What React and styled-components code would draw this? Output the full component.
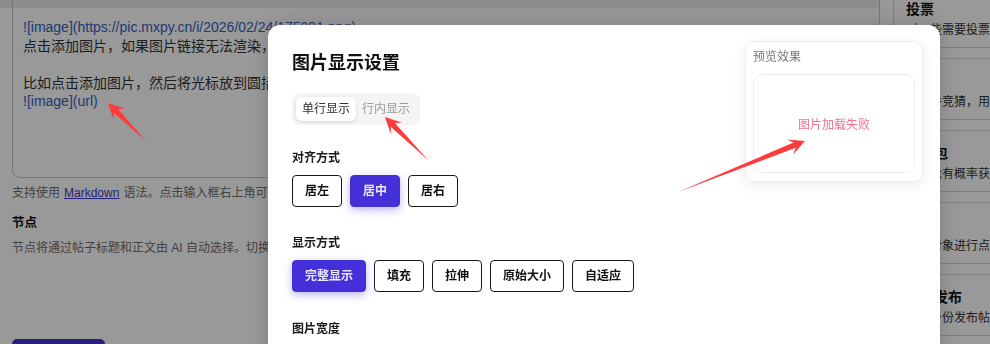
import React from 'react'
import styled, { createGlobalStyle } from 'styled-components'

const GlobalStyle = createGlobalStyle`
  html, body { margin: 0; height: 344px; overflow: hidden; }
  body {
    font-family: "Liberation Sans", "Noto Sans CJK SC", sans-serif;
    background: #fff;
    color: #333;
  }
`

const Page = styled.div`
  display: flex;
  gap: 13px;
  width: 990px;
  height: 344px;
  overflow: hidden;
`

const Content = styled.div`
  width: 880px;
  flex-shrink: 0;
  padding-left: 12px;
  box-sizing: border-box;
  background: linear-gradient(#ececec 0 8px, #fff 8px);
`

const Editor = styled.div`
  height: 178px;
  box-sizing: border-box;
  border: 1px solid #c6c6c6;
  border-top: none;
  border-radius: 0 0 8px 8px;
  padding: 18px 10px 0;
  font-size: 14px;
  line-height: 18.5px;
  white-space: nowrap;
  overflow: hidden;
`

const Line = styled.div`
  min-height: 18.5px;
  color: ${p => (p.$code ? '#3462c2' : '#333')};
`

const Hint = styled.p`
  margin: 6px 0 0;
  font-size: 12px;
  line-height: 18px;
  color: #6e6e6e;
  white-space: nowrap;
  a { color: #4338ca; text-decoration: underline; margin: 0 4px; }
`

const FieldTitle = styled.h4`
  margin: 12px 0 0;
  font-size: 12.5px;
  line-height: 18px;
  font-weight: 700;
  color: #111;
`

const FieldDesc = styled.p`
  margin: 7px 0 0;
  font-size: 12px;
  line-height: 18px;
  color: #6e6e6e;
  white-space: nowrap;
`

const SubmitButton = styled.button`
  margin-top: 82px;
  width: 93px;
  height: 36px;
  border: none;
  border-radius: 5px;
  background: #4636cf;
`

const Side = styled.aside`
  flex: 1;
  display: flex;
  flex-direction: column;
  gap: 10px;
  margin-top: -14px;
`

const Card = styled.div`
  height: 62px;
  flex-shrink: 0;
  box-sizing: border-box;
  border: 1px solid #d6d6d6;
  border-right: none;
  padding: 12px 0 0 12px;
  white-space: nowrap;
  overflow: hidden;
`

const CardTitle = styled.div`
  font-size: 14px;
  line-height: 20px;
  font-weight: 700;
  color: #111;
`

const CardDesc = styled.div`
  margin-top: 2px;
  font-size: 12px;
  line-height: 18px;
  color: #333;
`

const Overlay = styled.div`
  position: fixed;
  inset: 0;
  background: rgba(0, 0, 0, 0.4);
`

const Modal = styled.div`
  position: fixed;
  left: 268px;
  top: 25px;
  width: 672px;
  height: 360px;
  box-sizing: border-box;
  padding: 16px 17px 0 24px;
  display: flex;
  background: #fff;
  border-radius: 12px 12px 0 0;
  box-shadow: 0 0 24px rgba(0, 0, 0, 0.18);
  font-family: "Inter", "Noto Sans CJK SC", sans-serif;
`

const ModalBody = styled.div`
  flex: 1;
  padding-top: 9px;
`

const ModalTitle = styled.h2`
  margin: 0;
  font-size: 18px;
  line-height: 26px;
  font-weight: 700;
  color: #111;
`

const Tabs = styled.div`
  display: inline-flex;
  margin-top: 17px;
  padding: 4px;
  border-radius: 8px;
  background: #f4f4f5;
`

const Tab = styled.div`
  height: 24px;
  padding: 0 6px;
  font-size: 12px;
  line-height: 24px;
  border-radius: 6px;
  color: ${p => (p.$active ? '#333' : '#9a9a9a')};
  background: ${p => (p.$active ? '#fff' : 'transparent')};
  box-shadow: ${p => (p.$active ? '0 1px 3px rgba(0,0,0,0.14)' : 'none')};
`

const Section = styled.div`
  margin-top: ${p => p.$gap}px;
`

const Label = styled.div`
  font-size: 12px;
  line-height: 18px;
  font-weight: 600;
  color: #1a1a1a;
`

const Options = styled.div`
  display: flex;
  gap: 8px;
  margin-top: 8px;
`

const OptButton = styled.button`
  height: 32px;
  padding: 0 12px;
  box-sizing: border-box;
  border: 1px solid ${p => (p.$active ? '#4330d8' : '#1a1a1a')};
  border-radius: 4px;
  background: ${p => (p.$active ? '#4330d8' : '#fff')};
  color: ${p => (p.$active ? '#e9e6ff' : '#111')};
  box-shadow: ${p => (p.$active ? '0 3px 8px rgba(67,48,216,0.35)' : 'none')};
  font-family: inherit;
  font-size: 12px;
  font-weight: 700;
  line-height: 30px;
`

const Preview = styled.div`
  width: 178px;
  height: 141px;
  flex-shrink: 0;
  box-sizing: border-box;
  display: flex;
  flex-direction: column;
  padding: 6px 7px 8px;
  border: 1px solid #eeeeee;
  border-radius: 10px;
  box-shadow: 0 4px 14px rgba(0, 0, 0, 0.08);
`

const PreviewLabel = styled.div`
  font-size: 12px;
  line-height: 18px;
  color: #777;
`

const PreviewBox = styled.div`
  flex: 1;
  margin-top: 8px;
  display: flex;
  align-items: center;
  justify-content: center;
  border: 1px solid #eeeeee;
  border-radius: 10px;
  font-size: 12px;
  color: #f3718f;
`

const Marks = styled.svg`
  position: fixed;
  left: 0;
  top: 0;
  pointer-events: none;
`

const arrowPoints = ([tx, ty], [px, py]) => {
  const len = Math.hypot(px - tx, py - ty)
  const dx = (px - tx) / len
  const dy = (py - ty) / len
  const nx = -dy
  const ny = dx
  const L = 16
  const W = 8
  const neck = [px - dx * L * 0.7, py - dy * L * 0.7]
  const wing = [px - dx * L, py - dy * L]
  const pts = [
    [tx, ty],
    [neck[0] + nx * 2.8, neck[1] + ny * 2.8],
    [wing[0] + nx * W, wing[1] + ny * W],
    [px, py],
    [wing[0] - nx * W, wing[1] - ny * W],
    [neck[0] - nx * 2.8, neck[1] - ny * 2.8],
  ]
  return pts.map(p => p.map(v => v.toFixed(1)).join(',')).join(' ')
}

const arrows = [
  [[147, 142], [108, 103]],
  [[428, 160], [385, 117]],
  [[678, 192], [805, 141]],
]

const cards = [
  { title: '投票', desc: '对一些需要投票的问题发起投票' },
  { title: '竞猜', desc: '对事件竞猜，用户可以参与下注' },
  { title: '发红包', desc: '发评论有概率获得红包奖励' },
  { title: '点评', desc: '选择对象进行点评打分' },
  { title: '匿名发布', desc: '隐藏身份发布帖子内容' },
]

export default function App() {
  return (
    <>
      <GlobalStyle />
      <Page>
        <Content>
          <Editor>
            <Line $code>![image](https://pic.mxpy.cn/i/2026/02/24/175991.png)</Line>
            <Line>点击添加图片，如果图片链接无法渲染，可以尝试更换图片链接后再次插入。</Line>
            <Line />
            <Line>比如点击添加图片，然后将光标放到圆括号中，粘贴图片链接即可。</Line>
            <Line $code>![image](url)</Line>
          </Editor>
          <Hint>
            支持使用<a href="#">Markdown</a>语法。点击输入框右上角可以切换预览模式。
          </Hint>
          <FieldTitle>节点</FieldTitle>
          <FieldDesc>节点将通过帖子标题和正文由 AI 自动选择。切换节点后可重新选择。</FieldDesc>
          <SubmitButton />
        </Content>
        <Side>
          {cards.map(c => (
            <Card key={c.title}>
              <CardTitle>{c.title}</CardTitle>
              <CardDesc>{c.desc}</CardDesc>
            </Card>
          ))}
        </Side>
      </Page>
      <Overlay />
      <Modal>
        <ModalBody>
          <ModalTitle>图片显示设置</ModalTitle>
          <Tabs>
            <Tab $active>单行显示</Tab>
            <Tab>行内显示</Tab>
          </Tabs>
          <Section $gap={24}>
            <Label>对齐方式</Label>
            <Options>
              <OptButton>居左</OptButton>
              <OptButton $active>居中</OptButton>
              <OptButton>居右</OptButton>
            </Options>
          </Section>
          <Section $gap={27}>
            <Label>显示方式</Label>
            <Options>
              <OptButton $active>完整显示</OptButton>
              <OptButton>填充</OptButton>
              <OptButton>拉伸</OptButton>
              <OptButton>原始大小</OptButton>
              <OptButton>自适应</OptButton>
            </Options>
          </Section>
          <Section $gap={28}>
            <Label>图片宽度</Label>
          </Section>
        </ModalBody>
        <Preview>
          <PreviewLabel>预览效果</PreviewLabel>
          <PreviewBox>图片加载失败</PreviewBox>
        </Preview>
      </Modal>
      <Marks width="990" height="344" viewBox="0 0 990 344">
        {arrows.map(([t, p], i) => (
          <polygon key={i} points={arrowPoints(t, p)} fill="#ff3b3b" />
        ))}
      </Marks>
    </>
  )
}
